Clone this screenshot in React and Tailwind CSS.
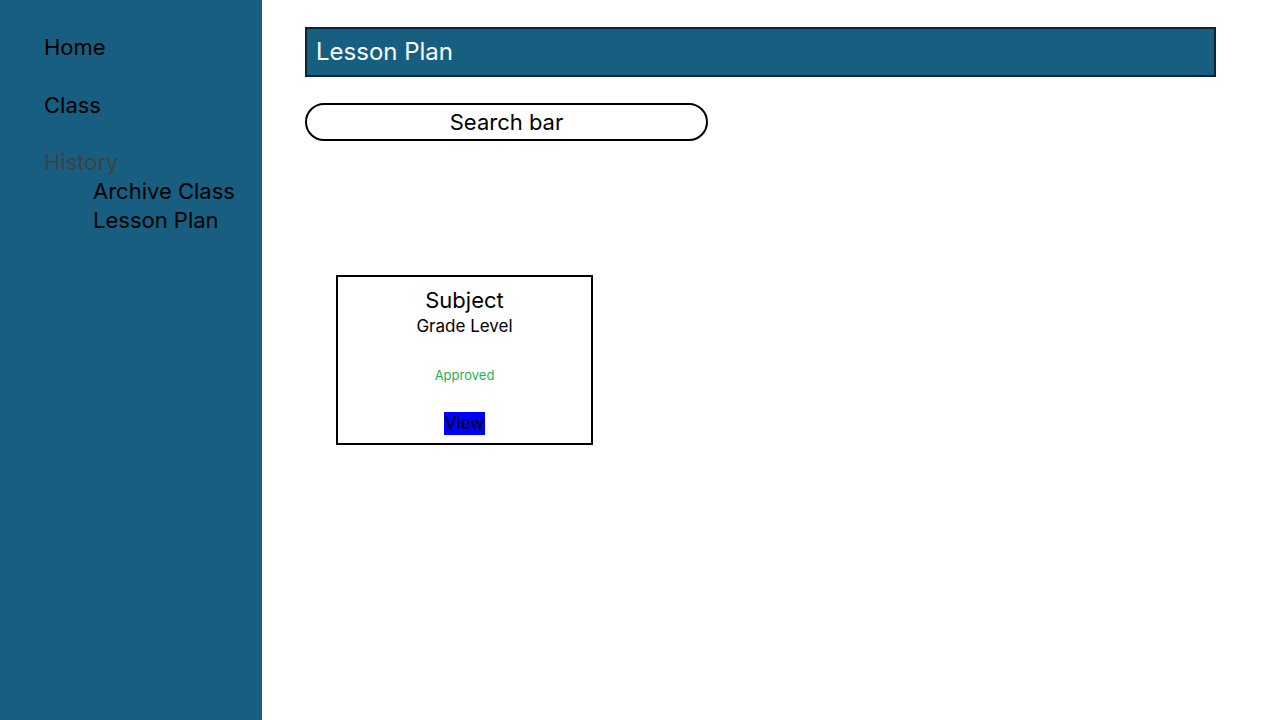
export default function App() {
  return (
    <div className="flex h-[720px] w-[1280px] bg-white font-['Inter',sans-serif] text-black">
      <aside className="w-[262px] shrink-0 bg-[#175e80] pl-[44px] pt-[32px]">
        <nav className="flex flex-col text-[22px] leading-[30px]">
          <a className="text-black">Home</a>
          <a className="mt-[28px] text-black">Class</a>
          <a className="mt-[27px] text-[#3d4347]">History</a>
          <div className="ml-[49px] flex flex-col leading-[29px]">
            <a className="text-black">Archive Class</a>
            <a className="text-black">Lesson Plan</a>
          </div>
        </nav>
      </aside>

      <main className="flex-1 pl-[43px] pr-[64px] pt-[27px]">
        <div className="flex h-[50px] items-center border-2 border-[#0b2533] bg-[#175f80] px-[9px]">
          <h1 className="text-[24px] text-white">Lesson Plan</h1>
        </div>

        <div className="mt-[26px] flex h-[38px] w-[403px] items-center justify-center rounded-full border-2 border-black text-[22px]">
          Search bar
        </div>

        <div className="ml-[31px] mt-[134px] flex h-[170px] w-[257px] flex-col items-center border-2 border-black pt-[10px]">
          <div className="text-[22px] leading-[26px]">Subject</div>
          <div className="text-[17px] leading-[26px]">Grade Level</div>
          <div className="mt-[27px] text-[13px] text-[#1fb152]">Approved</div>
          <button className="mt-[26px] bg-[#0000ff] px-px text-[17px] leading-[23px] text-black">View</button>
        </div>
      </main>
    </div>
  )
}
